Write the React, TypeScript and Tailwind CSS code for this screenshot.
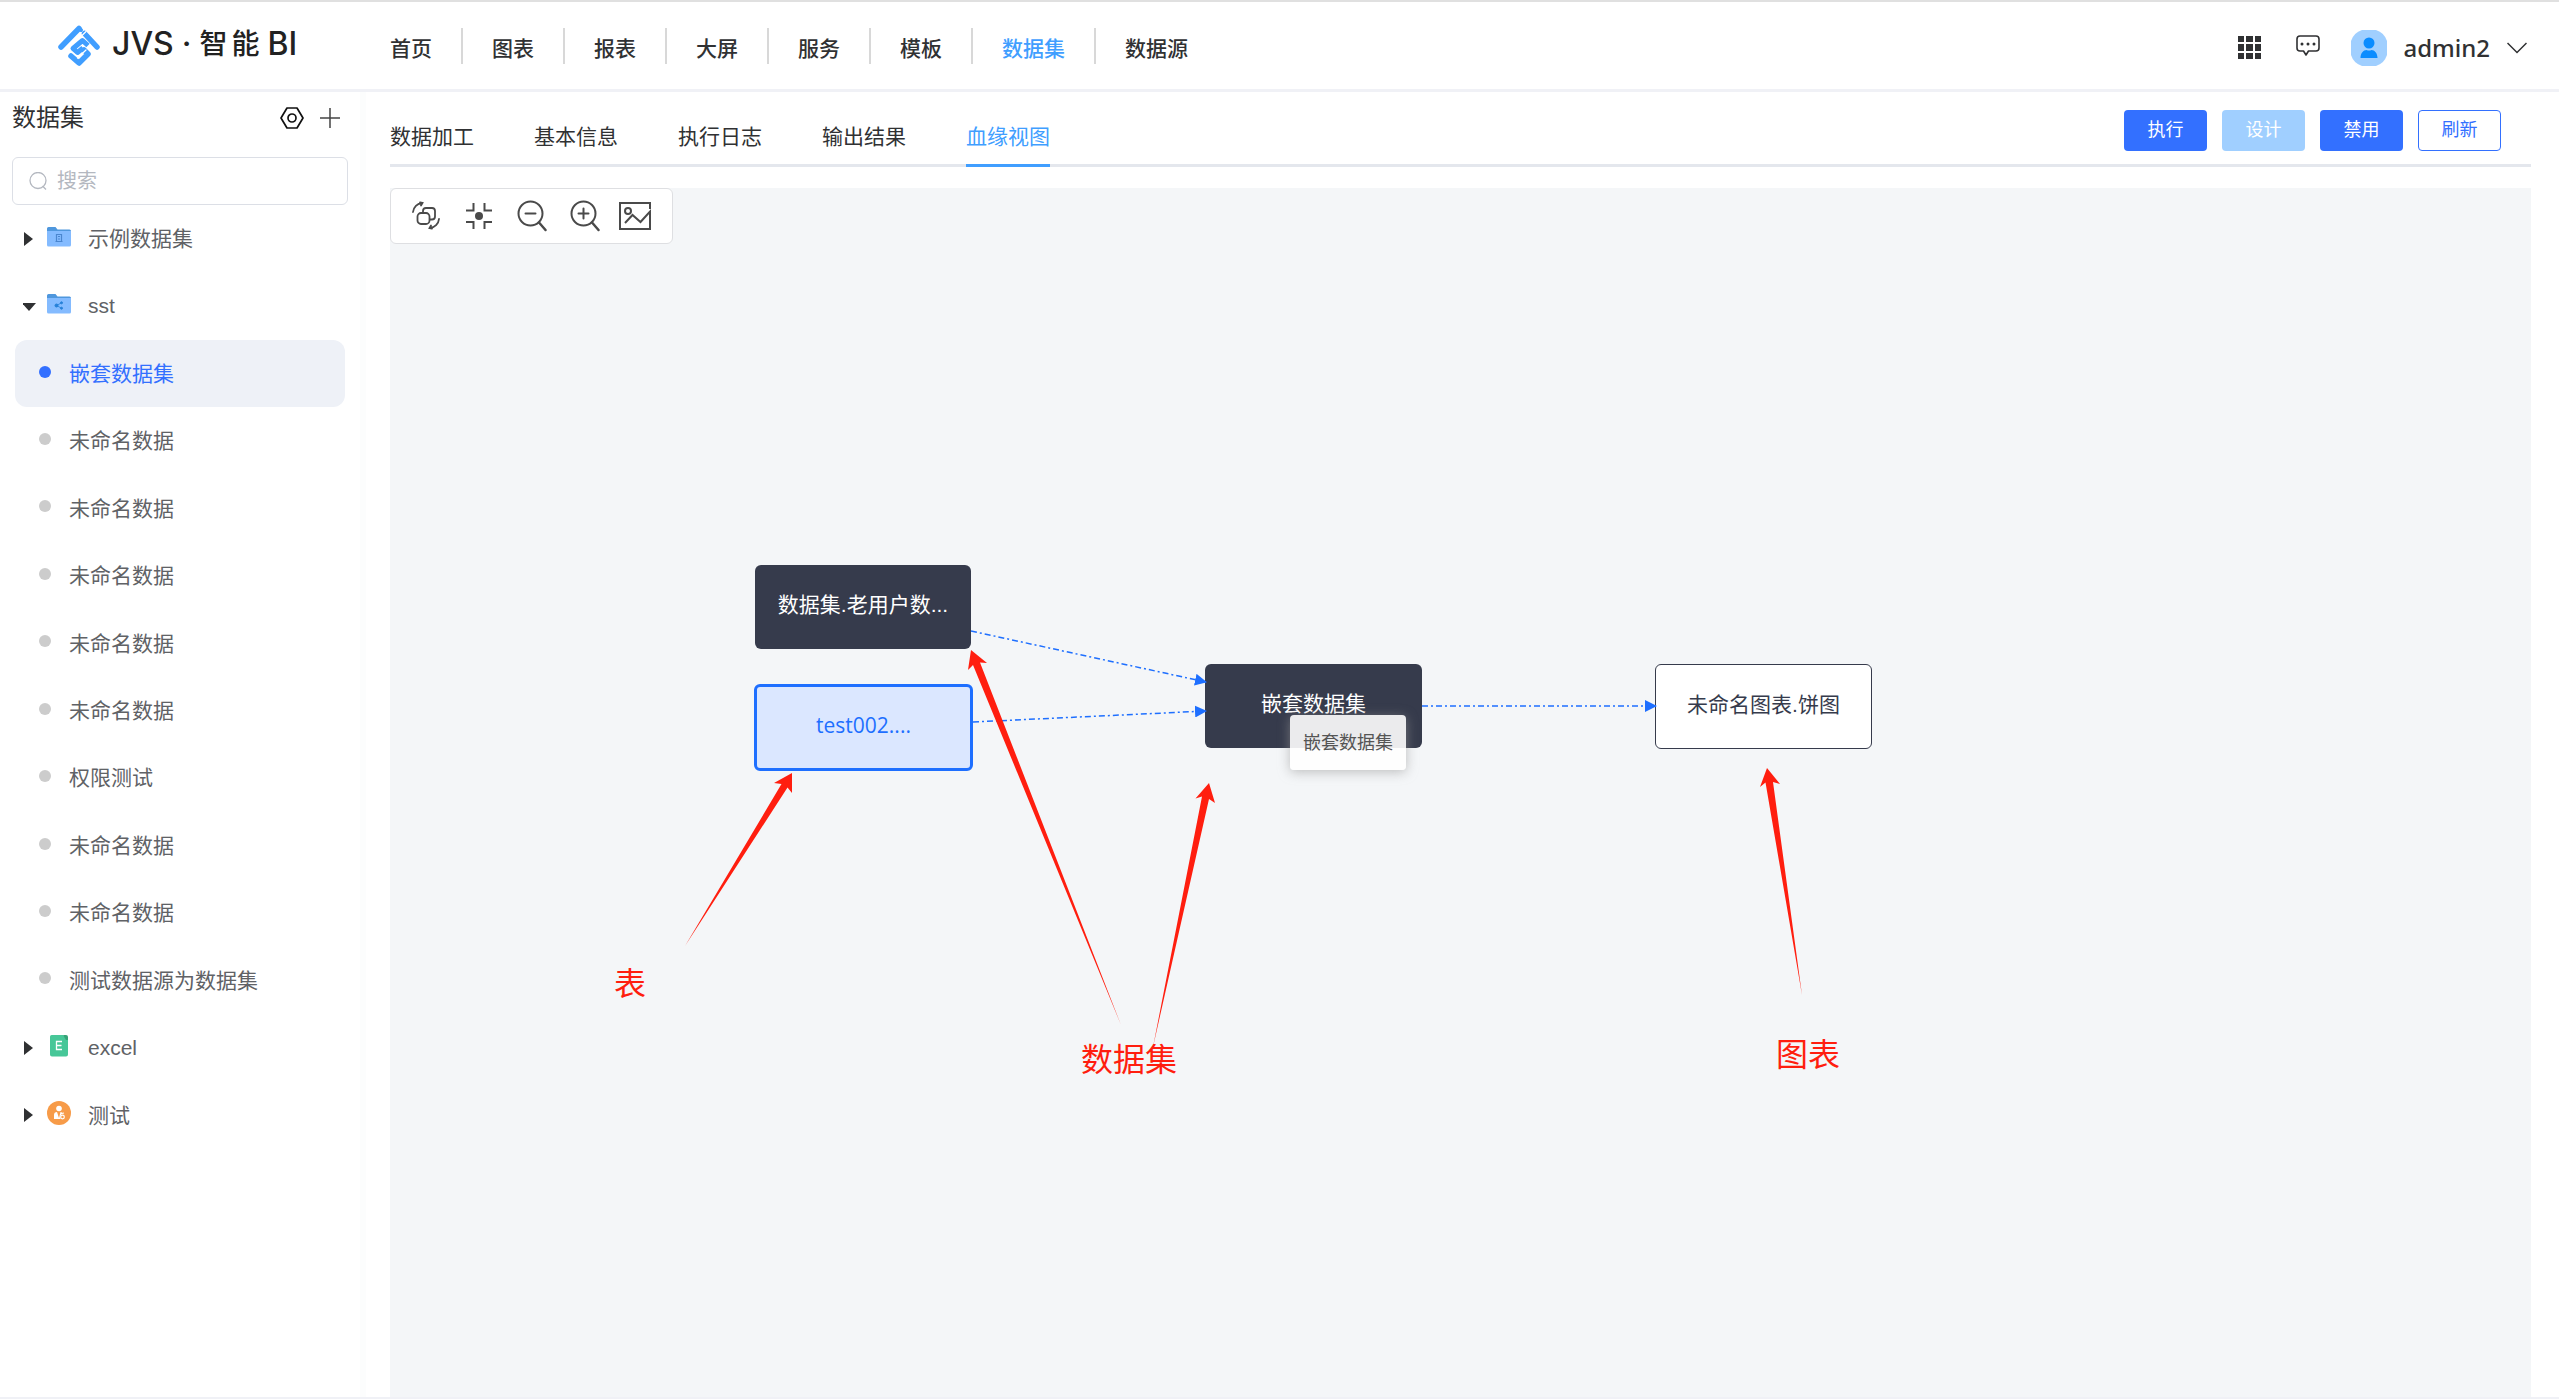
import { useState } from "react"

const navItems = ["首页", "图表", "报表", "大屏", "服务", "模板", "数据集", "数据源"]
const tabs = ["数据加工", "基本信息", "执行日志", "输出结果", "血缘视图"]

type TreeRow = { label: string; icon?: "building" | "share" | "excel" | "user"; open?: boolean }

const tree: TreeRow[] = [
  { label: "示例数据集", icon: "building" },
  { label: "sst", icon: "share", open: true },
  { label: "嵌套数据集" },
  { label: "未命名数据" },
  { label: "未命名数据" },
  { label: "未命名数据" },
  { label: "未命名数据" },
  { label: "未命名数据" },
  { label: "权限测试" },
  { label: "未命名数据" },
  { label: "未命名数据" },
  { label: "测试数据源为数据集" },
  { label: "excel", icon: "excel" },
  { label: "测试", icon: "user" },
]

function Logo() {
  return (
    <a href="#" className="flex items-center gap-3 text-[#222]">
      <svg width="42" height="42" viewBox="0 0 42 42" fill="none" stroke="#409eff" strokeLinecap="round" strokeLinejoin="round">
        <path d="M3 22 L21 3.500" strokeWidth="5.500" />
        <path d="M26.500 8.500 L39 22" strokeWidth="5.500" />
        <path d="M21 3.500 L23 5" strokeWidth="4" />
        <path d="M30 20.500 L24.500 15.500 L15 23.500 L19.500 27.500 L25 23" strokeWidth="5" strokeLinecap="butt" />
        <path d="M13 31 L21 38 L30 29 L26 25" strokeWidth="5.500" />
        <path d="M19.500 33 L28 25" stroke="#fff" strokeWidth="1.200" />
        <path d="M20.500 14 L28 6.500" stroke="#fff" strokeWidth="1.200" />
      </svg>
      <span className="flex items-center gap-2 pb-1 font-['Inter','Noto_Sans_CJK_SC',sans-serif] text-[32px] leading-10 font-medium">
        <span>JVS</span>
        <span>·</span>
        <span className="flex gap-1 text-[28px]">
          <span>智</span>
          <span>能</span>
        </span>
        <span>BI</span>
      </span>
    </a>
  )
}

function Header() {
  return (
    <header className="flex h-[92px] shrink-0 items-center border-t-2 border-b-3 border-t-[#e0e0e0] border-b-[#f0f1f6] pr-8 pl-[58px]">
      <div className="w-[303px] shrink-0">
        <Logo />
      </div>
      <nav className="flex items-center">
        {navItems.map((item) => (
          <a
            key={item}
            href="#"
            className={`flex h-9 items-center border-r-2 border-[#d8d8d8] px-[29px] pt-[6px] text-[21px] font-medium last:border-r-0 ${item === "数据集" ? "text-[#409eff]" : "text-[#303133]"}`}
          >
            {item}
          </a>
        ))}
      </nav>
      <div className="ml-auto flex items-center pt-1">
        <button type="button" aria-label="应用" className="mr-[35px]">
          <svg width="23" height="23" viewBox="0 0 23 23" fill="#303133">
            <path d="M0 0h6v6H0zM8 0h7v6H8zM17 0h6v6h-6zM0 8h6v7H0zM8 8h7v7H8zM17 8h6v7h-6zM0 17h6v6H0zM8 17h7v6H8zM17 17h6v6h-6z" />
          </svg>
        </button>
        <button type="button" aria-label="消息" className="mr-[31px] pb-1">
          <svg width="24" height="22" viewBox="0 0 24 22" fill="none" stroke="#303133" strokeWidth="1.600" strokeLinejoin="round">
            <path d="M4 1h16a3 3 0 0 1 3 3v9a3 3 0 0 1-3 3h-7.500L10 20l-2.500-4H4a3 3 0 0 1-3-3V4a3 3 0 0 1 3-3z" />
            <g fill="#303133" stroke="none">
              <circle cx="6" cy="9" r="1.500" />
              <circle cx="12" cy="9" r="1.500" />
              <circle cx="18" cy="9" r="1.500" />
            </g>
          </svg>
        </button>
        <button type="button" className="flex items-center text-2xl font-medium text-[#303133]">
          <svg width="36" height="36" viewBox="0 0 36 36" className="mr-4">
            <path d="M11 0h14a17 17 0 0 1 11 11v14a17 17 0 0 1-11 11H11A17 17 0 0 1 0 25V11A17 17 0 0 1 11 0z" fill="#a0cfff" />
            <circle cx="18" cy="13" r="5.500" fill="#0a8cff" />
            <path d="M9.500 28c0-5 3-8 6-8q2.500 1 5 0c3 0 6 3 6 8z" fill="#0a8cff" />
          </svg>
          <span className="font-['Noto_Sans',sans-serif]">admin2</span>
          <svg width="20" height="12" viewBox="0 0 20 12" fill="none" stroke="#303133" strokeWidth="1.500" className="ml-[17px]">
            <path d="M0.500 1 L10 10.500 L19.500 1" />
          </svg>
        </button>
      </div>
    </header>
  )
}

function RowIcon({ icon }: { icon: TreeRow["icon"] }) {
  if (icon === "excel") {
    return (
      <svg width="24" height="24" viewBox="0 0 24 24">
        <path d="M5.500 1H16l5 5v14.500a2 2 0 0 1-2 2H5a2 2 0 0 1-2-2V3a2 2 0 0 1 2.500-2z" fill="#47c798" />
        <path d="M16 1h3a2 2 0 0 1 2 2v3h-2z" fill="#35a377" />
        <path d="M15 7.500H9.500v8H15M9.500 11.500h5" fill="none" stroke="#fff" strokeWidth="1.300" />
      </svg>
    )
  }
  if (icon === "user") {
    return (
      <svg width="24" height="24" viewBox="0 0 24 24">
        <circle cx="12" cy="12" r="12" fill="#f79b48" />
        <circle cx="12" cy="7.500" r="2.800" fill="#fff" />
        <path d="M7 18v-4q0-3 3-3l2 6 1.500-6q2 0 2 1.500-3 1.500-2 5.500z" fill="#fff" />
        <circle cx="15.500" cy="16" r="1.800" fill="none" stroke="#fff" strokeWidth="1.200" />
        <path d="M14.500 12.500l2.500-.5" stroke="#fff" strokeWidth="1.200" />
      </svg>
    )
  }
  return (
    <svg width="24" height="24" viewBox="0 0 24 24">
      <path d="M0 3.500a1.500 1.500 0 0 1 1.500-1.500h7l2 2.500H22.500A1.500 1.500 0 0 1 24 6v4H0z" fill="#4f97dd" />
      <path d="M0 6h24v14a1.500 1.500 0 0 1-1.500 1.500h-21A1.500 1.500 0 0 1 0 20z" fill="#84bbff" />
      {icon === "building" ? (
        <path d="M9.500 16.500v-7h5v7M8.500 16.500h7M11 11.500h2M11 14h2" fill="none" stroke="#4a86cf" strokeWidth="1.200" />
      ) : (
        <g fill="#2580d8" stroke="#2580d8">
          <circle cx="9.500" cy="13.500" r="1.500" />
          <circle cx="14.500" cy="10.800" r="1" />
          <circle cx="14.500" cy="16.200" r="1" />
          <path d="M14.500 10.800l-5 2.700 5 2.700" fill="none" strokeWidth="0.800" />
        </g>
      )}
    </svg>
  )
}

function Sidebar() {
  const [active, setActive] = useState(2)

  return (
    <aside className="w-[366px] shrink-0 border-r-6 border-[#fcfdfd]">
      <div className="flex h-[52px] items-center pr-5 pl-3">
        <h2 className="text-2xl text-[#303133]">数据集</h2>
        <button type="button" aria-label="设置" className="ml-auto">
          <svg width="24" height="22" viewBox="0 0 24 22" fill="none" stroke="#111" strokeWidth="1.700" strokeLinejoin="round">
            <path d="M7 1h10l6 10-6 10H7L1 11z" />
            <circle cx="12" cy="11" r="4" />
          </svg>
        </button>
        <button type="button" aria-label="新增" className="ml-4">
          <svg width="20" height="20" viewBox="0 0 20 20" stroke="#444" strokeWidth="1.500">
            <path d="M10 0v20M0 10h20" />
          </svg>
        </button>
      </div>
      <label className="mx-3 mt-[13px] flex h-12 items-center gap-[10px] rounded-md border border-[#dcdfe6] px-4">
        <svg width="18" height="18" viewBox="0 0 18 18" fill="none" stroke="#b4b8c0" strokeWidth="1.300" className="shrink-0">
          <circle cx="9" cy="8.500" r="8" />
          <path d="M13.500 14l3.500 3.500" />
        </svg>
        <input type="text" placeholder="搜索" aria-label="搜索" className="w-full min-w-0 text-xl outline-none placeholder:text-[#b4b8c0]" />
      </label>
      <ul className="grid h-[944px] auto-rows-fr px-[15px] text-[21px] text-[#606266]">
        {tree.map((row, i) => (
          <li key={i}>
            <button
              type="button"
              onClick={() => setActive(i)}
              className={`flex h-full w-full items-center rounded-xl text-left ${row.icon ? "pl-2" : "pl-6"} ${i === active ? "bg-[#eef1f7] text-[#3370ff]" : ""}`}
            >
              {row.icon ? (
                <>
                  <svg width="14" height="14" viewBox="0 0 14 14" fill="#303133" className="mr-[10px]">
                    <path d={row.open ? "M-1 4h14l-7 8z" : "M1 0l9 7-9 7z"} />
                  </svg>
                  <span className="pb-1">
                    <RowIcon icon={row.icon} />
                  </span>
                  <span className="ml-[17px]">{row.label}</span>
                </>
              ) : (
                <>
                  <span className="pb-1">
                    <span className={`block size-3 rounded-full ${i === active ? "bg-[#3370ff]" : "bg-[#ccc]"}`} />
                  </span>
                  <span className="ml-[18px]">{row.label}</span>
                </>
              )}
            </button>
          </li>
        ))}
      </ul>
    </aside>
  )
}

function TabBar() {
  return (
    <div className="flex h-[75px] items-stretch border-b-3 border-[#e4e7ed]">
      <div role="tablist" className="flex gap-[60px]">
        {tabs.map((tab) => (
          <button
            key={tab}
            type="button"
            role="tab"
            aria-selected={tab === "血缘视图"}
            className={`-mb-[3px] border-b-3 pt-[18px] text-[21px] ${tab === "血缘视图" ? "border-[#409eff] text-[#409eff]" : "border-transparent text-[#303133]"}`}
          >
            {tab}
          </button>
        ))}
      </div>
      <div className="mr-[30px] ml-auto flex items-center gap-[15px] pt-1 text-lg text-white">
        <button type="button" className="h-[41px] w-[83px] rounded bg-[#3370ff]">执行</button>
        <button type="button" disabled className="h-[41px] w-[83px] rounded bg-[#a0cfff]">设计</button>
        <button type="button" className="h-[41px] w-[83px] rounded bg-[#3370ff]">禁用</button>
        <button type="button" className="h-[41px] w-[83px] rounded border border-[#3370ff] text-[#3370ff]">刷新</button>
      </div>
    </div>
  )
}

function Toolbar() {
  return (
    <div className="flex h-14 w-[283px] items-center gap-[23px] rounded-md border border-[#dedfe2] bg-white pl-5">
      <button type="button" aria-label="重新布局">
        <svg width="30" height="30" viewBox="0 0 30 30" fill="none" stroke="#4a4a4a" strokeWidth="1.800" strokeLinecap="round">
          <path d="M2 11A10 10 0 0 1 11 2M9 1.500l2.500 .5-1.500 2.500" />
          <path d="M28 18a10 10 0 0 1-9 9M21 27.500l-2.500-.5 1.500-2.500" />
          <rect x="6.500" y="12" width="12" height="11" rx="3.500" />
          <path d="M12 11.500V10a3 3 0 0 1 3-3h6a3 3 0 0 1 3 3v5.500a3 3 0 0 1-3 3h-2" />
        </svg>
      </button>
      <button type="button" aria-label="居中">
        <svg width="30" height="26" viewBox="-2 0 30 26" fill="none" stroke="#4a4a4a" strokeWidth="2">
          <path d="M0 7.500h7.500V0M18.500 0v7.500H26M0 19h7.500v7M18.500 26v-7H26" />
          <circle cx="13" cy="13" r="4" fill="#4a4a4a" stroke="none" />
        </svg>
      </button>
      <button type="button" aria-label="缩小">
        <svg width="30" height="32" viewBox="0 0 30 32" fill="none" stroke="#4a4a4a" strokeWidth="2" strokeLinecap="round">
          <circle cx="13.500" cy="13.500" r="12" />
          <path d="M8.500 13.500h10" />
          <path d="M22 22.500l6.500 7.500" strokeWidth="2.500" />
        </svg>
      </button>
      <button type="button" aria-label="放大">
        <svg width="30" height="32" viewBox="0 0 30 32" fill="none" stroke="#4a4a4a" strokeWidth="2" strokeLinecap="round">
          <circle cx="13.500" cy="13.500" r="12" />
          <path d="M8.500 13.500h10M13.500 8.500v10" />
          <path d="M22 22.500l6.500 7.500" strokeWidth="2.500" />
        </svg>
      </button>
      <button type="button" aria-label="导出图片" className="-ml-1">
        <svg width="32" height="28" viewBox="0 0 32 28" fill="none" stroke="#4a4a4a" strokeWidth="2">
          <path d="M31 7V1H1v26h30V9.500L21.500 20l-8-7L6 21" />
          <circle cx="9" cy="9" r="3" />
        </svg>
      </button>
    </div>
  )
}

const nodeStyle = "absolute flex items-center justify-center rounded-md pb-1 text-[21px]"

function LineageGraph() {
  return (
    <div className="relative min-h-0 flex-1 overflow-hidden bg-[#f4f6f8]">
      <Toolbar />
      <div className={`${nodeStyle} top-[377px] left-[365px] h-[84px] w-[216px] bg-[#363b4c] text-white`}>数据集.老用户数...</div>
      <div className={`${nodeStyle} top-[496px] left-[364px] h-[87px] w-[219px] border-3 border-[#1e6fff] bg-[#dbe7ff] text-[#1e6fff]`}>
        <span className="font-['Open_Sans',sans-serif]">test002....</span>
      </div>
      <div className={`${nodeStyle} top-[476px] left-[815px] h-[84px] w-[217px] bg-[#363b4c] text-white`}>嵌套数据集</div>
      <div className={`${nodeStyle} top-[476px] left-[1265px] h-[85px] w-[217px] border border-[#363b4c] bg-white text-[#363b4c]`}>未命名图表.饼图</div>

      <svg className="pointer-events-none absolute inset-0 size-full">
        <defs>
          <marker id="edgeEnd" viewBox="0 0 12 12" refX="11" refY="6" markerWidth="12" markerHeight="12" markerUnits="userSpaceOnUse" orient="auto">
            <path d="M0 0l12 6-12 6z" fill="#1e6fff" />
          </marker>
        </defs>
        <g stroke="#1e6fff" strokeWidth="1.500" strokeDasharray="6 3 2 3">
          <path d="M581 443L816 494" markerEnd="url(#edgeEnd)" />
          <path d="M583 534L816 523" markerEnd="url(#edgeEnd)" />
          <path d="M1032 518L1266 518" markerEnd="url(#edgeEnd)" />
        </g>
        <g fill="#ff1e0f">
          <path d="M402 585L384 595L391.500 596L295 758L397.500 599.500L402 605z" />
          <path d="M581 462L578 482L583 477L731 837L590 474.500L597 475z" />
          <path d="M819 595L805.500 610.500L812 608.500L763 859L819 611L825 615z" />
          <path d="M1377 580L1370 599L1375.500 594.500L1412 807L1383 594L1390 596z" />
        </g>
      </svg>

      <div className="absolute top-[527px] left-[900px] rounded bg-white/90 px-[13px] pt-[15px] pb-[13px] text-lg leading-[27px] text-[#555] shadow-[0_2px_12px_rgba(150,150,150,0.6)]">嵌套数据集</div>
      <p className="absolute top-[772px] left-[224px] text-[32px] leading-12 text-[#ff1e0f]">表</p>
      <p className="absolute top-[848px] left-[691px] text-[32px] leading-12 text-[#ff1e0f]">数据集</p>
      <p className="absolute top-[843px] left-[1386px] text-[32px] leading-12 text-[#ff1e0f]">图表</p>
    </div>
  )
}

function App() {
  return (
    <div className="flex h-screen flex-col border-b-2 border-[#f0f1f6] bg-white font-['Liberation_Sans','Noto_Sans_CJK_SC',sans-serif]">
      <Header />
      <div className="flex min-h-0 flex-1">
        <Sidebar />
        <main className="flex min-w-0 flex-1 flex-col gap-[21px] pr-7 pl-6">
          <TabBar />
          <LineageGraph />
        </main>
      </div>
    </div>
  )
}

export default App
